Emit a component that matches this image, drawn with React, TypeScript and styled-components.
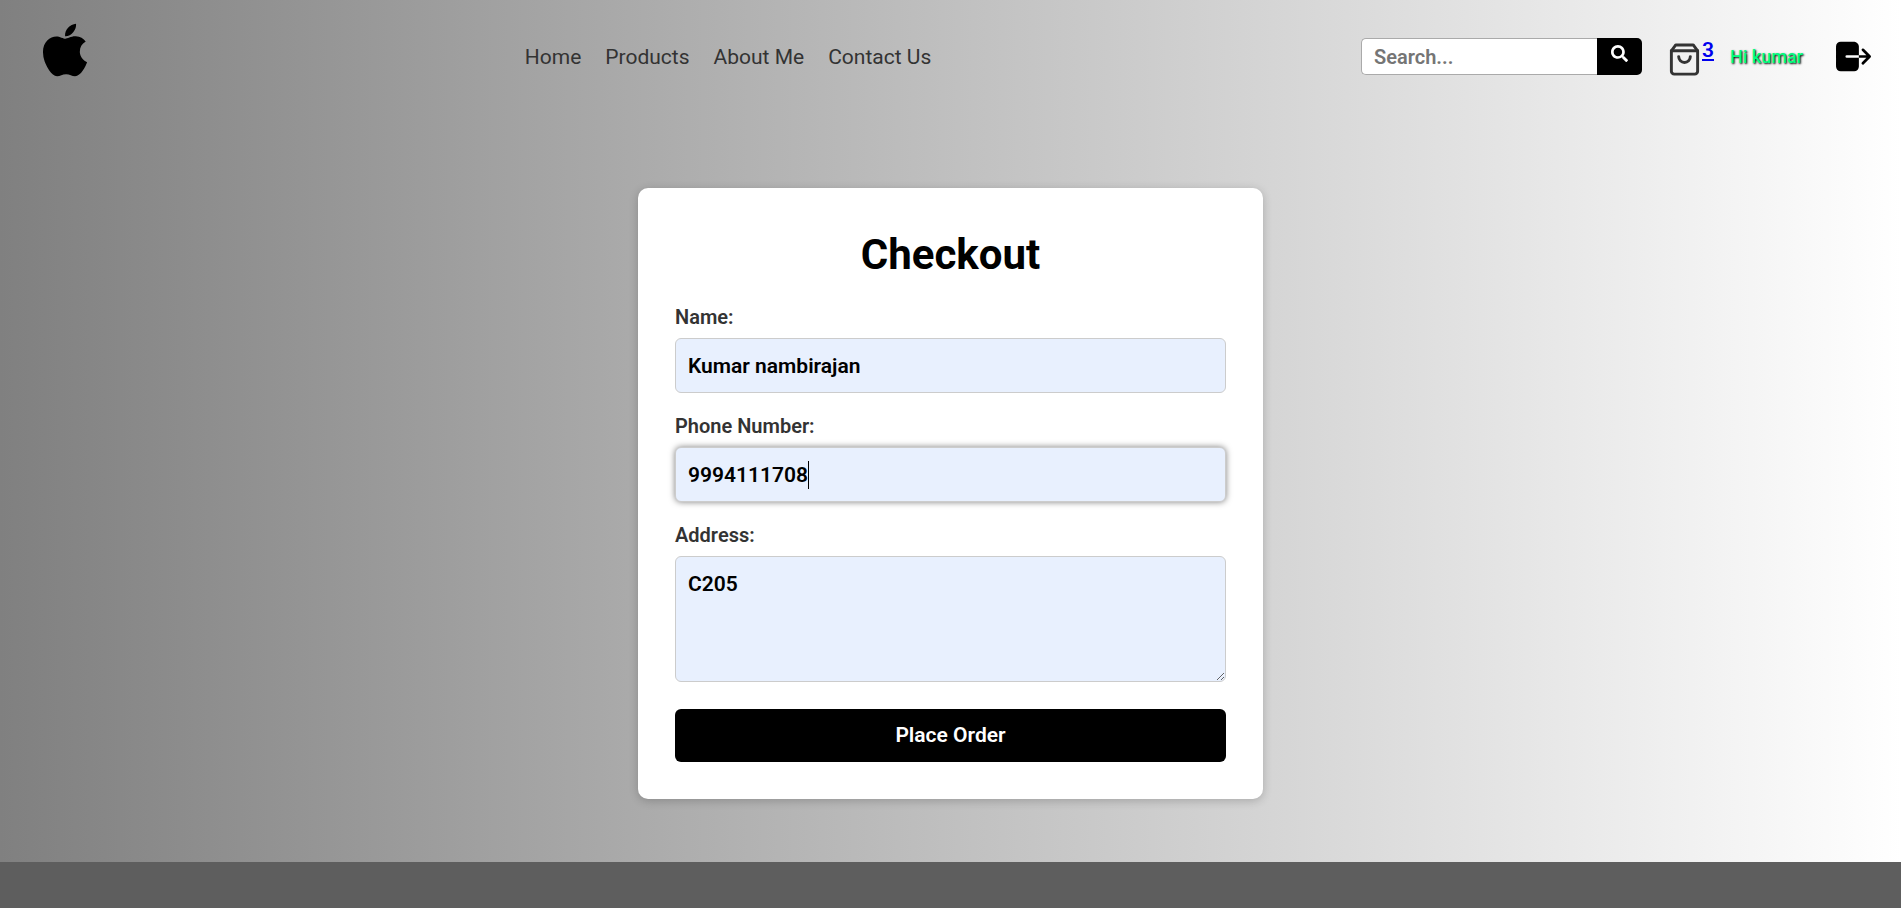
import React, { useLayoutEffect, useRef, useState } from 'react';
import styled, { createGlobalStyle } from 'styled-components';
import { FaApple, FaSearch } from 'react-icons/fa';
import { FiShoppingBag } from 'react-icons/fi';
import { IoLogOut } from 'react-icons/io5';

const GlobalStyle = createGlobalStyle`
  *, *::before, *::after { box-sizing: border-box; }
  body {
    margin: 0;
    font-family: Roboto, "Liberation Sans", sans-serif;
    color: #000;
  }
  input, textarea, button { font-family: inherit; }
`;

const Page = styled.div`
  min-height: 100vh;
  display: flex;
  flex-direction: column;
  background: linear-gradient(to right, #808080, #ffffff);
`;

const Header = styled.header`
  display: flex;
  align-items: center;
  justify-content: space-between;
  min-height: 113px;
  padding: 0 26px 0 35px;
`;

const LogoLink = styled.a`
  display: flex;
  padding-bottom: 14px;
  color: #000;
  font-size: 60px;
`;

const Nav = styled.nav`
  display: flex;
  gap: 24px;
`;

const NavLink = styled.a`
  color: #333;
  font-size: 21px;
  line-height: 24px;
  text-decoration: none;
`;

const Actions = styled.div`
  display: flex;
  align-items: center;
`;

const SearchForm = styled.form`
  display: flex;
  height: 37px;
  margin-right: 25px;
`;

const SearchInput = styled.input`
  width: 236px;
  padding: 0 12px;
  border: 1px solid #aaa;
  border-right-width: 0;
  border-radius: 5px 0 0 5px;
  background: #fff;
  font-size: 20px;
  font-weight: 600;
  outline: none;

  &::placeholder { color: #757575; }
`;

const SearchButton = styled.button`
  display: flex;
  justify-content: center;
  width: 45px;
  padding: 7px 0 0;
  border: 0;
  border-radius: 0 5px 5px 0;
  background: #000;
  color: #fff;
  font-size: 17px;
`;

const CartLink = styled.a`
  display: flex;
  align-items: flex-start;
  padding-top: 6px;
  margin-right: 16px;
  color: #0000ee;

  svg {
    color: #333;
    font-size: 35px;
  }
`;

const CartCount = styled.span`
  font-size: 21px;
  font-weight: 600;
  line-height: 16px;
  text-decoration: underline;
`;

const Greeting = styled.span`
  margin-right: 29px;
  color: #00ff7f;
  font-size: 18px;
  font-weight: 500;
  line-height: 24px;
  text-shadow: 1px 1px 2px #000;
`;

const LogoutButton = styled.button`
  display: flex;
  padding: 0;
  border: 0;
  background: none;
  color: #000;
  font-size: 43px;
`;

const Main = styled.main`
  display: flex;
  justify-content: center;
  padding: 75px 20px 63px;
`;

const Card = styled.form`
  display: flex;
  flex-direction: column;
  width: 100%;
  max-width: 625px;
  padding: 37px;
  border-radius: 10px;
  background: #fff;
  box-shadow: 0 2px 10px rgba(0, 0, 0, 0.2);
`;

const Title = styled.h1`
  margin: 0 0 20px;
  font-size: 42px;
  font-weight: 700;
  line-height: 60px;
  text-align: center;
`;

const Fields = styled.div`
  display: flex;
  flex-direction: column;
  gap: 21px;
  margin-bottom: 27px;
`;

const Field = styled.div`
  display: flex;
  flex-direction: column;
  gap: 9px;
`;

const Label = styled.label`
  color: #333;
  font-size: 20px;
  font-weight: 600;
  line-height: 24px;
`;

const TextInput = styled.input`
  display: block;
  width: 100%;
  height: 55px;
  padding: 13px 12px;
  border: 1px solid #ccc;
  border-radius: 6px;
  background: #e8f0fe;
  color: #000;
  font-size: 21px;
  font-weight: 600;
  line-height: 28px;
  outline: none;

  &:focus { box-shadow: 0 0 6px rgba(0, 0, 0, 0.5); }
`;

const TextArea = styled(TextInput)`
  height: 126px;
  resize: vertical;
`;

const CaretBox = styled.div`
  position: relative;

  input { caret-color: transparent; }
  &:not(:focus-within) > span { display: none; }
`;

const Caret = styled.span`
  position: absolute;
  top: 14px;
  width: 1px;
  height: 28px;
  background: #000;
  pointer-events: none;
`;

const SubmitButton = styled.button`
  height: 53px;
  padding: 0 0 2px;
  border: 0;
  border-radius: 6px;
  background: #000;
  color: #fff;
  font-size: 21px;
  font-weight: 600;
`;

const Footer = styled.footer`
  flex: 1;
  min-height: 46px;
  background: #5e5e5e;
`;

const links = ['Home', 'Products', 'About Me', 'Contact Us'];

/* Input with a steady caret that follows the insertion point. */
function CaretInput({ id, type, value, onValue }: {
  id: string;
  type: string;
  value: string;
  onValue: (value: string) => void;
}) {
  const ref = useRef<HTMLInputElement>(null);
  const [position, setPosition] = useState(value.length);
  const [left, setLeft] = useState(0);

  useLayoutEffect(() => {
    const input = ref.current;
    const context = document.createElement('canvas').getContext('2d');
    if (!input || !context) return;
    const style = getComputedStyle(input);
    context.font = `${style.fontWeight} ${style.fontSize} ${style.fontFamily}`;
    const start = parseFloat(style.paddingLeft) + parseFloat(style.borderLeftWidth);
    setLeft(Math.round(start + context.measureText(value.slice(0, position)).width));
  }, [value, position]);

  return (
    <CaretBox>
      <TextInput
        ref={ref}
        id={id}
        type={type}
        value={value}
        autoFocus
        onFocus={(e) => e.target.setSelectionRange(value.length, value.length)}
        onSelect={(e) => setPosition(e.currentTarget.selectionEnd ?? value.length)}
        onChange={(e) => onValue(e.target.value)}
      />
      <Caret style={{ left }} />
    </CaretBox>
  );
}

export default function App() {
  const [name, setName] = useState('Kumar nambirajan');
  const [phone, setPhone] = useState('9994111708');
  const [address, setAddress] = useState('C205');

  return (
    <Page>
      <GlobalStyle />
      <Header>
        <LogoLink href="#" aria-label="Store home"><FaApple /></LogoLink>
        <Nav>
          {links.map((link) => <NavLink key={link} href="#">{link}</NavLink>)}
        </Nav>
        <Actions>
          <SearchForm onSubmit={(e) => e.preventDefault()}>
            <SearchInput type="text" placeholder="Search..." aria-label="Search" />
            <SearchButton type="submit" aria-label="Search"><FaSearch /></SearchButton>
          </SearchForm>
          <CartLink href="#" aria-label="Cart">
            <FiShoppingBag />
            <CartCount>3</CartCount>
          </CartLink>
          <Greeting>Hi kumar</Greeting>
          <LogoutButton type="button" aria-label="Log out"><IoLogOut /></LogoutButton>
        </Actions>
      </Header>
      <Main>
        <Card onSubmit={(e) => e.preventDefault()}>
          <Title>Checkout</Title>
          <Fields>
            <Field>
              <Label htmlFor="name">Name:</Label>
              <TextInput id="name" type="text" value={name} onChange={(e) => setName(e.target.value)} />
            </Field>
            <Field>
              <Label htmlFor="phone">Phone Number:</Label>
              <CaretInput id="phone" type="tel" value={phone} onValue={setPhone} />
            </Field>
            <Field>
              <Label htmlFor="address">Address:</Label>
              <TextArea
                as="textarea"
                id="address"
                value={address}
                onChange={(e: React.ChangeEvent<any>) => setAddress(e.target.value)}
              />
            </Field>
          </Fields>
          <SubmitButton type="submit">Place Order</SubmitButton>
        </Card>
      </Main>
      <Footer />
    </Page>
  );
}
